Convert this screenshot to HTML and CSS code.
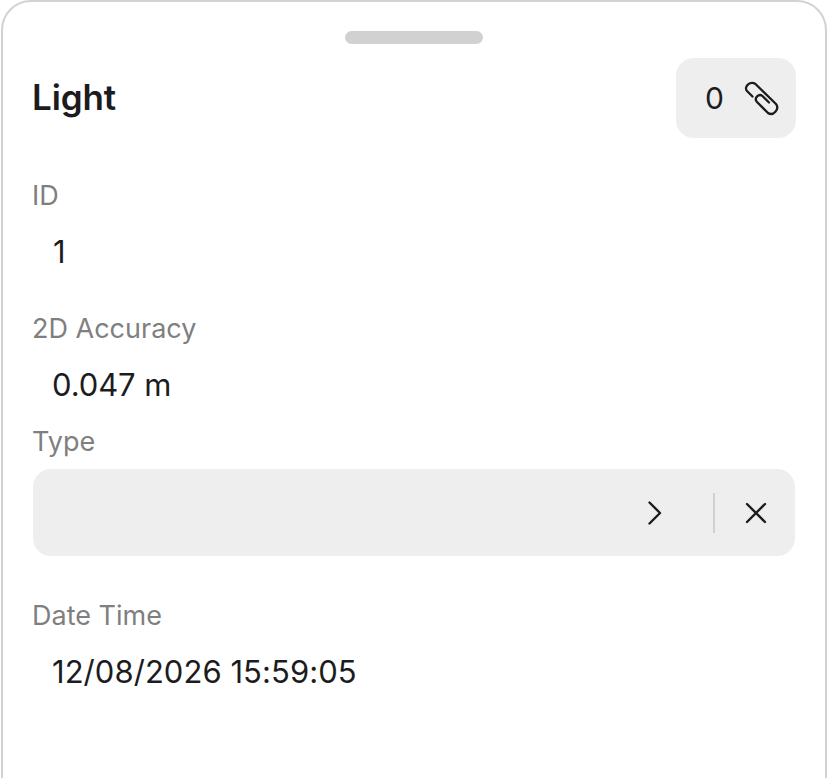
FILE: index.html
```html
<!DOCTYPE html>
<html lang="en">
<head>
  <meta charset="UTF-8">
  <meta name="viewport" content="width=device-width, initial-scale=1.0">
  <title>Light</title>
  <link rel="stylesheet" href="styles.css">
</head>
<body>
  <div class="sheet">
    <div class="handle"></div>
    <div class="header">
      <h1>Light</h1>
      <div class="attach">
        <span>0</span>
        <svg width="42" height="40" viewBox="0 0 42 40" fill="none" stroke="#1c1c1e" stroke-width="2.3" stroke-linecap="round" stroke-linejoin="round">
          <path d="M12.5 18.5 L7 13 C3.5 9 10 2.5 15.5 6 L36 26 C40 31 33 38.5 28 35 L17 24 C13.5 20 19 15 22.5 18 L29 24.5"/>
        </svg>
      </div>
    </div>
    <div class="label l-id">ID</div>
    <div class="value v-id">1</div>
    <div class="label l-acc">2D Accuracy</div>
    <div class="value v-acc">0.047 m</div>
    <div class="label l-type">Type</div>
    <div class="select">
      <svg width="16" height="26" viewBox="0 0 16 26" fill="none" stroke="#1c1c1e" stroke-width="2.4" stroke-linecap="round" stroke-linejoin="round"><path d="M2.5 2.5 L13 13 L2.5 23.5"/></svg>
      <div class="divider"></div>
      <svg class="clear" width="22" height="22" viewBox="0 0 22 22" fill="none" stroke="#1c1c1e" stroke-width="2.4" stroke-linecap="round"><path d="M2 2 L20 20 M20 2 L2 20"/></svg>
    </div>
    <div class="label l-date">Date Time</div>
    <div class="value v-date">12/08/2026 15:59:05</div>
  </div>
</body>
</html>
```
FILE: styles.css
```css
html, body { margin: 0; height: 100%; background: #fff; overflow: hidden; }
body { font-family: Inter, "Liberation Sans", sans-serif; color: #1c1c1e; }
.sheet {
  box-sizing: border-box;
  height: 800px;
  margin: 0 1px;
  padding: 29px 30px 0 30px;
  border: 2px solid #d2d2d2;
  border-radius: 30px 30px 0 0;
}
.handle { width: 138px; height: 13px; margin: 0 auto; border-radius: 7px; background: #d1d1d1; }
.header { display: flex; justify-content: space-between; align-items: center; margin: 14px -1px 0 0; }
h1 { margin: 0 0 2px -1px; font-size: 35px; font-weight: 600; letter-spacing: -0.1px; }
.attach {
  display: flex; align-items: center; gap: 16px;
  box-sizing: border-box; width: 120px; height: 80px; padding-left: 29px;
  border-radius: 18px; background: #eeeeee; font-size: 30px;
}
.label { margin-left: -1px; font-size: 27px; line-height: 34px; color: #7f7f7f; }
.value { font-size: 31px; line-height: 38px; padding-left: 20px; }
.l-id { margin-top: 41px; }
.v-id { margin-top: 20px; }
.l-acc { margin-top: 41px; }
.v-acc { margin-top: 20px; margin-left: -1px; letter-spacing: -0.1px; }
.l-type { margin-top: 21px; }
.select {
  display: flex; align-items: center; justify-content: flex-end;
  height: 87px; margin-top: 10px; padding-right: 28px;
  border-radius: 18px; background: #eeeeee;
}
.divider { width: 2px; height: 40px; margin: 0 30px 0 50px; background: #d0d0d0; }
.l-date { margin-top: 43px; }
.v-date { margin-top: 20px; margin-left: -1px; letter-spacing: 0.05px; }
```
